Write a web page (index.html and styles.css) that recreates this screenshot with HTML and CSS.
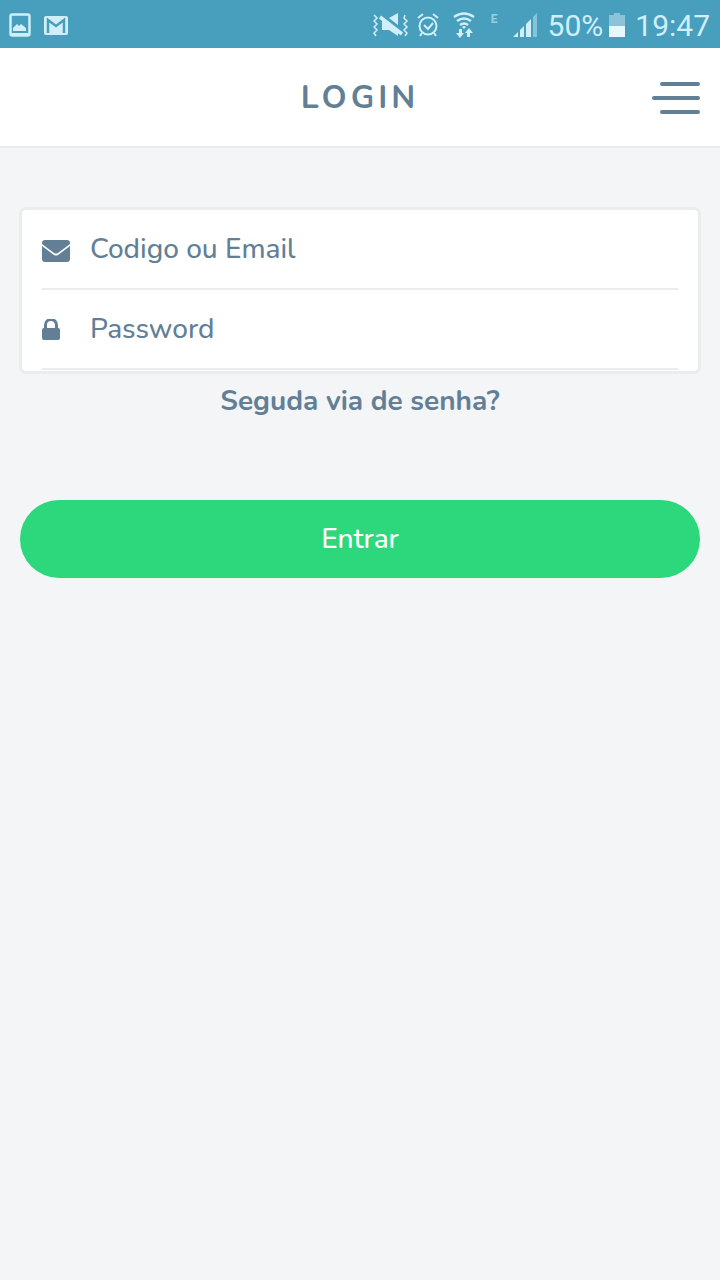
FILE: index.html
```
<!DOCTYPE html>
<html lang="pt-BR">
<head>
<meta charset="UTF-8">
<meta name="viewport" content="width=device-width, initial-scale=1.0">
<title>Login</title>
<link rel="stylesheet" href="styles.css">
</head>
<body>

<div class="status-bar">
  <div class="status-left">
    <svg width="22" height="24" viewBox="0 0 22 24">
      <rect x="1.5" y="1.5" width="19" height="21" rx="2" fill="none" stroke="currentColor" stroke-width="2.5"/>
      <path d="M4 18v-3l4-4 2 2 2-2 5 4v3z" fill="currentColor"/>
      <path d="M2 20h18v2H2z" fill="currentColor"/>
    </svg>
    <svg width="24" height="19" viewBox="0 0 24 19">
      <rect width="24" height="19" rx="2" fill="currentColor"/>
      <path d="M4 17V4l8 6 8-6v13" fill="none" stroke="#479ebd" stroke-width="2.500"/>
    </svg>
  </div>
  <div class="status-right">
    <svg class="icon-mute" width="36" height="26" viewBox="0 0 36 26">
      <path d="M1 3l3 3-3 3 3 3-3 3 3 3-3 3 2 3M32 3l-1 3 3 3-3 3 3 3-3 3 3 3-2 3" fill="none" stroke="currentColor" stroke-width="1.5"/>
      <path d="M16 6l9-5v12zM9 8l16 11v5l-9-6H9z" fill="currentColor"/>
      <path d="M7 5l22 17" stroke="currentColor" stroke-width="3.500"/>
    </svg>
    <svg class="icon-alarm" width="22" height="24" viewBox="0 0 22 24" fill="none" stroke="currentColor" stroke-width="2">
      <circle cx="11" cy="13" r="8.5"/>
      <path d="M1 5l5-4M21 5l-5-4M5 20l-2 3M17 20l2 3M7 12l4 4 5-6"/>
    </svg>
    <svg class="icon-wifi" width="22" height="26" viewBox="0 0 22 26">
      <path d="M1 5q10-7 20 0M4 9q7-5 14 0M7 13q4-3 8 0" fill="none" stroke="currentColor" stroke-width="2.500"/>
      <path d="M11 17l-2-2q2-2 4 0zM6 17h3v4h2l-4 5-4-5h3zM14 25v-4h-2l4-5 4 5h-3v4z" fill="currentColor"/>
    </svg>
    <span class="network">E</span>
    <svg class="icon-signal" width="24" height="24" viewBox="0 0 24 24">
      <path d="M0 24l5-5v5zM7 17l4-4v11H7zM13 11l5-5v18h-5z" fill="currentColor"/>
      <path d="M20 4l4-4v24h-4z" fill="currentColor" opacity=".45"/>
    </svg>
    <span class="status-text battery-level">50%</span>
    <svg class="icon-battery" width="16" height="24" viewBox="0 0 16 24">
      <path d="M0 2h5V0h6v2h5v11H0z" fill="#8dc3d8"/>
      <path d="M0 13h16v11H0z" fill="#e6f8fc"/>
    </svg>
    <span class="status-text">19:47</span>
  </div>
</div>

<header class="header">
  <h1>LOGIN</h1>
  <button type="button" class="menu-button" aria-label="Menu">
    <span></span>
    <span></span>
    <span></span>
  </button>
</header>

<main>
  <form class="login-form">
    <div class="fields">
      <div class="field">
        <label for="login" aria-label="Codigo ou Email">
          <svg width="28" height="22" viewBox="0 0 28 22">
            <path d="M3 0h22q3 0 3 3v1L16 13q-2 1-4 0L0 4V3q0-3 3-3z" fill="currentColor"/>
            <path d="M0 6l12 9q2 1 4 0l12-9v13q0 3-3 3H3q-3 0-3-3z" fill="currentColor"/>
          </svg>
        </label>
        <input type="text" id="login" placeholder="Codigo ou Email">
      </div>
      <div class="field">
        <label for="password" aria-label="Password">
          <svg width="18" height="24" viewBox="0 0 18 24">
            <rect y="9" width="18" height="12" rx="2" fill="currentColor"/>
            <path d="M3.500 10V6a5.500 5.500 0 0 1 11 0v4" fill="none" stroke="currentColor" stroke-width="3"/>
          </svg>
        </label>
        <input type="password" id="password" placeholder="Password">
      </div>
    </div>
    <a href="#" class="forgot">Seguda via de senha?</a>
    <button type="submit" class="submit">Entrar</button>
  </form>
</main>

</body>
</html>
```
FILE: styles.css
```
* {
  box-sizing: border-box;
}

body {
  font-family: Nunito, Lato, sans-serif;
  background: #f3f5f7;
  color: #637f96;
  min-height: 100vh;
  margin: 0;
}

svg {
  display: block;
  flex: none;
}

.status-bar {
  display: flex;
  justify-content: space-between;
  align-items: center;
  height: 48px;
  padding: 2px 10px 0 9px;
  background: #479ebd;
  color: #d0eff9;
}

.status-left,
.status-right {
  display: flex;
  align-items: center;
}

.status-left {
  gap: 13px;
}

.icon-mute {
  margin-right: 8px;
}

.icon-alarm {
  margin-right: 14px;
}

.icon-wifi {
  margin-right: 16px;
}

.network {
  align-self: flex-start;
  margin: 7px 15px 0 0;
  font: bold 12px/12px Roboto, sans-serif;
  opacity: 0.6;
}

.icon-signal {
  margin-right: 11px;
}

.status-text {
  padding-top: 2px;
  font: 30px/36px Roboto, sans-serif;
}

.battery-level {
  margin-right: 6px;
}

.icon-battery {
  margin-right: 10px;
}

.header {
  display: grid;
  grid-template-columns: 1fr auto 1fr;
  align-items: center;
  height: 100px;
  padding: 2px 20px 0;
  background: #fff;
  border-bottom: 2px solid #e9ebee;
}

.header h1 {
  grid-column: 2;
  margin: 0;
  font-size: 32px;
  line-height: 40px;
  letter-spacing: 4px;
}

.menu-button {
  display: flex;
  flex-direction: column;
  align-items: flex-end;
  justify-self: end;
  gap: 10px;
  padding: 0;
  border: none;
  background: none;
  cursor: pointer;
}

.menu-button span {
  width: 40px;
  height: 4px;
  border-radius: 2px;
  background: #637f96;
}

.menu-button span:nth-child(2) {
  width: 48px;
}

.login-form {
  display: flex;
  flex-direction: column;
  padding: 60px 20px;
}

.fields {
  padding: 0 20px 1px;
  background: #fff;
  border: 2px solid #ebecee;
  border-radius: 6px;
  box-shadow: 0 0 2px #d4d7da;
}

.field {
  display: flex;
  align-items: center;
  height: 80px;
  border-bottom: 2px solid #ebecee;
}

.field label {
  width: 48px;
  padding-top: 3px;
}

.field input {
  flex: 1;
  min-width: 0;
  padding: 0;
  border: none;
  outline: none;
  background: none;
  color: #637f96;
  font: 500 28px/40px Nunito, Lato, sans-serif;
}

.field input::placeholder {
  color: #637f96;
  opacity: 1;
}

.forgot {
  align-self: center;
  margin: 8px 0 79px;
  color: #637f96;
  font-size: 28px;
  font-weight: bold;
  line-height: 40px;
  text-decoration: none;
}

.submit {
  height: 78px;
  padding: 0;
  border: none;
  border-radius: 39px;
  background: #2cd87b;
  color: #fff;
  font: 500 28px/40px Nunito, Lato, sans-serif;
  cursor: pointer;
}
```
